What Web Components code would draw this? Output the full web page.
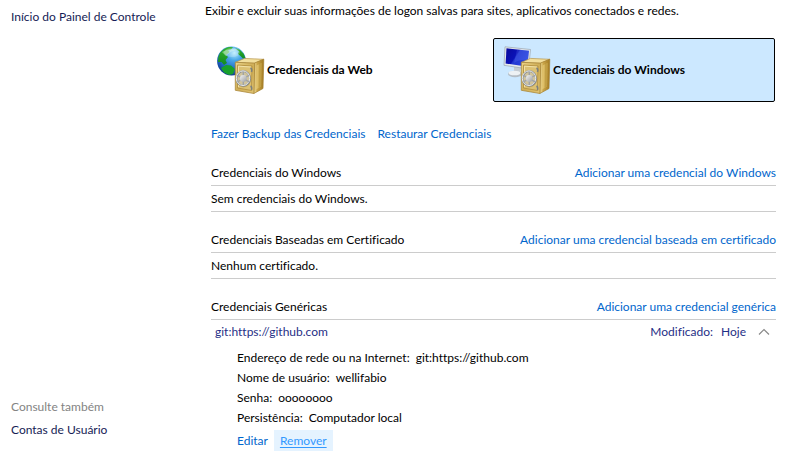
<!DOCTYPE html>
<html lang="pt-BR">
<head>
<meta charset="utf-8">
<title>Gerenciador de Credenciais</title>
<style>
html { scrollbar-width: none; background: #fff; }
body { margin: 0; font: 12px/20px Lato, "Open Sans", sans-serif; font-variant-ligatures: none; color: #000; }
</style>
</head>
<body>
<credential-manager></credential-manager>

<template id="t-app">
<style>
:host { display: flex; min-height: 100vh; }
main { flex: 1; min-width: 0; padding: 1px 12px 0 0; }
h1 { margin: 0; font: inherit; white-space: nowrap; }
.tiles { display: grid; grid-template-columns: 1fr 1fr; gap: 4px; margin: 17px 1px 0 2px; }
.body { margin-left: 6px; }
.links { display: flex; gap: 12px; margin: 22px 0 19px; }
.sections { display: grid; gap: 18px; }
</style>
<side-bar></side-bar>
<main>
  <h1>Exibir e excluir suas informações de logon salvas para sites, aplicativos conectados e redes.</h1>
  <div class="tiles">
    <vault-tile><vault-icon slot="icon" kind="web"></vault-icon>Credenciais da Web</vault-tile>
    <vault-tile selected><vault-icon slot="icon" kind="windows"></vault-icon>Credenciais do Windows</vault-tile>
  </div>
  <div class="body">
    <div class="links">
      <task-link>Fazer Backup das Credenciais</task-link>
      <task-link>Restaurar Credenciais</task-link>
    </div>
    <div class="sections">
      <credential-section><span slot="title">Credenciais do Windows</span><span slot="action">Adicionar uma credencial do Windows</span><empty-row>Sem credenciais do Windows.</empty-row></credential-section>
      <credential-section><span slot="title">Credenciais Baseadas em Certificado</span><span slot="action">Adicionar uma credencial baseada em certificado</span><empty-row>Nenhum certificado.</empty-row></credential-section>
      <credential-section><span slot="title">Credenciais Genéricas</span><span slot="action">Adicionar uma credencial genérica</span><credential-entry></credential-entry></credential-section>
    </div>
  </div>
</main>
</template>

<template id="t-side">
<style>
:host { display: flex; flex: 0 0 205px; box-sizing: border-box; flex-direction: column; justify-content: space-between; padding: 7px 8px 12px 11px; }
a { color: #151c55; text-decoration: none; display: block; }
a:hover { text-decoration: underline; }
p { margin: 0 0 3px; color: #838383; }
</style>
<a href="#">Início do Painel de Controle</a>
<nav><p>Consulte também</p><a href="#">Contas de Usuário</a></nav>
</template>

<template id="t-tile">
<style>
:host { display: block; }
button { box-sizing: border-box; width: 100%; height: 64px; display: flex; align-items: center; gap: 2px; padding: 0 9px; border: 1px solid transparent; border-radius: 2px; background: none; font: inherit; font-weight: 700; color: #000; text-align: left; white-space: nowrap; }
:host([selected]) button { background: #cce8ff; border-color: #000; }
</style>
<button type="button"><slot name="icon"></slot><span><slot></slot></span></button>
</template>

<template id="t-icon">
<style>
:host { display: block; width: 48px; height: 48px; }
svg { display: block; }
.web, .windows { display: none; }
:host([kind="web"]) .web, :host([kind="windows"]) .windows { display: inline; }
</style>
<svg width="48" height="48" viewBox="0 0 48 48" aria-hidden="true">
  <defs>
    <radialGradient id="sea" cx=".6" cy=".22" r=".85"><stop offset="0" stop-color="#b4ecff"/><stop offset=".3" stop-color="#4aa8e8"/><stop offset=".7" stop-color="#1c62c0"/><stop offset="1" stop-color="#0b2f80"/></radialGradient>
    <linearGradient id="land" x2="0" y2="1"><stop offset="0" stop-color="#35b52c"/><stop offset="1" stop-color="#138a22"/></linearGradient>
    <linearGradient id="screen" x2="1" y2=".5"><stop offset="0" stop-color="#0a0a9c"/><stop offset=".5" stop-color="#0a12b8"/><stop offset=".55" stop-color="#2236d0"/><stop offset="1" stop-color="#2c48e0"/></linearGradient>
    <linearGradient id="front" x2="1" y2="1"><stop offset="0" stop-color="#ecd58a"/><stop offset=".5" stop-color="#cfae56"/><stop offset="1" stop-color="#e2c676"/></linearGradient>
    <linearGradient id="side"><stop offset="0" stop-color="#f6e7a8"/><stop offset=".35" stop-color="#caa548"/><stop offset="1" stop-color="#a27a22"/></linearGradient>
    <linearGradient id="steel" x2="1" y2="1"><stop offset="0" stop-color="#f4f4f4"/><stop offset="1" stop-color="#9a9da0"/></linearGradient>
  </defs>
  <g class="web">
    <circle cx="14.5" cy="15" r="14.4" fill="url(#sea)"/>
    <path d="M3 7 Q7 2 12 1 L16 1.300 L14 3.500 L11 4 L12.500 6 L9 9 L11 11 L8.500 14 L10 17 L7 19 L4.500 16 L1 16 Q.5 11 3 7Z" fill="url(#land)"/>
    <path d="M18 2 L23 4 Q27 7 28.300 12 L26 12.500 L23.500 10 L21 8 L22 5.500Z" fill="url(#land)"/>
    <path d="M4 22 L9 19 L14 19.500 L18 23 L16 28 L12 29 Q6 27 4 22Z" fill="#18a02c"/>
    <path d="M5 6 Q13 1 21 4 Q14 4 9 10Z" fill="#dffbe8" opacity=".45"/>
    <ellipse cx="15" cy="6.500" rx="8" ry="4.500" fill="#fff" opacity=".22"/>
  </g>
  <g class="windows">
    <path d="M11 19 L18 20 L17 26 L11 25Z" fill="#c5ccd2"/>
    <ellipse cx="12" cy="28" rx="7" ry="3.200" fill="#b4bdc5"/>
    <ellipse cx="11.500" cy="27" rx="6" ry="2.300" fill="#edf1f4"/>
    <path d="M2 .8 L27.500 3.500 L25.500 23 L1 19.300Z" fill="#e5e9ec" stroke="#99a5af" stroke-width=".7"/>
    <path d="M3.500 2.300 L26 4.700 L24.300 20.700 L2.600 17.500Z" fill="url(#screen)"/>
    <path d="M14 3.500 L26 4.700 L25 14 Q17 13 11 17Z" fill="#718df8" opacity=".2"/>
  </g>
  <g>
    <path d="M18.500 16.300 L27.500 12.400 L46.700 13.300 L37.800 17.300Z" fill="#f2df9d" stroke="#b8954a" stroke-width=".7" stroke-linejoin="round"/>
    <path d="M37.500 17 L46.800 13.200 L46 42.500 L36.800 47.500Z" fill="url(#side)" stroke="#a5802f" stroke-width=".7" stroke-linejoin="round"/>
    <path d="M39.500 19.500 L44.500 17 L44 40.500 L39 43.500Z" fill="#e9ce7b" opacity=".65"/>
    <path d="M41.800 18.300 L44.500 17 L44 40.500 L41.500 42Z" fill="#b38d31" opacity=".6"/>
    <path d="M18.300 16.300 L37.700 17.200 L36.900 47.500 L18.300 44.300Z" fill="url(#front)" stroke="#ab883a" stroke-width=".8" stroke-linejoin="round"/>
    <path d="M20.500 19 L35 20 L34.500 44.500 L20.500 42Z" fill="#dcc173" stroke="#b08d3e" stroke-width=".8"/>
    <path d="M21.500 20.200 L34 21 M21.500 20.200 V41" stroke="#f8eab6" stroke-width=".8" fill="none"/>
    <path d="M33.500 22 q2 1 1 4 M33.500 40 q1.800 1 1 4" stroke="#7c807e" stroke-width="1.500" fill="none"/>
    <ellipse cx="26.500" cy="33" rx="7.600" ry="8.200" fill="#a4873f" opacity=".6"/>
    <ellipse cx="26.300" cy="32.500" rx="6.800" ry="7.400" fill="#d0c49c" stroke="#8b8f93" stroke-width="1.800"/>
    <ellipse cx="26" cy="32.200" rx="6.700" ry="7.300" fill="none" stroke="#e9ebed" stroke-width="1"/>
    <path d="M26.300 26 V39 M20.500 29.300 L32 35.800 M20.500 35.800 L32 29.300" stroke="#a0a3a6" stroke-width="1.400"/>
    <circle cx="26.300" cy="32.500" r="3.400" fill="url(#steel)"/>
  </g>
</svg>
</template>

<template id="t-link">
<style>
:host { display: inline-block; white-space: nowrap; }
a { color: #0066cc; text-decoration: none; display: block; }
:host([hot]) a { color: #3399ff; background: #e5f3ff; text-decoration: underline; text-underline-offset: 2px; padding: 1px 6px; }
</style>
<a href="#"><slot></slot></a>
</template>

<template id="t-section">
<style>
:host { display: block; }
header { display: flex; justify-content: space-between; padding-bottom: 2px; border-bottom: 1px solid #ccc; white-space: nowrap; }
h2 { margin: 0; font: inherit; }
</style>
<section><header><h2><slot name="title"></slot></h2><task-link><slot name="action"></slot></task-link></header><slot></slot></section>
</template>

<template id="t-empty">
<style>:host { display: block; padding: 3px 0 2px; border-bottom: 1px solid #ccc; }</style>
<slot></slot>
</template>

<template id="t-entry">
<style>
:host { display: block; }
button { width: 100%; display: flex; align-items: center; gap: 8px; padding: 2px 6px 2px 4px; border: 0; background: none; font: inherit; color: #1f2f86; text-align: left; }
.name { flex: 1; }
svg { display: block; margin-left: 4px; }
dl { margin: 4px 0 2px 26px; }
dl div { display: flex; gap: 6px; }
dd { margin: 0; }
.actions { display: flex; align-items: center; gap: 6px; margin-left: 26px; }
</style>
<button type="button" aria-expanded="true"><span class="name">git:https://github.com</span><span>Modificado:</span><span>Hoje</span><svg width="12" height="12" viewBox="0 0 12 12" aria-hidden="true"><path d="M1 8.500 L6 3.500 L11 8.500" fill="none" stroke="#888" stroke-width="1.200"/></svg></button>
<dl>
  <div><dt>Endereço de rede ou na Internet:</dt><dd>git:https://github.com</dd></div>
  <div><dt>Nome de usuário:</dt><dd>wellifabio</dd></div>
  <div><dt>Senha:</dt><dd>oooooooo</dd></div>
  <div><dt>Persistência:</dt><dd>Computador local</dd></div>
</dl>
<div class="actions"><task-link>Editar</task-link><task-link hot>Remover</task-link></div>
</template>

<script>
const parts = {
  'task-link': 't-link', 'vault-icon': 't-icon', 'vault-tile': 't-tile', 'side-bar': 't-side',
  'empty-row': 't-empty', 'credential-entry': 't-entry', 'credential-section': 't-section',
  'credential-manager': 't-app'
};
for (const [tag, id] of Object.entries(parts)) {
  customElements.define(tag, class extends HTMLElement {
    constructor() {
      super();
      this.attachShadow({ mode: 'open' }).append(document.getElementById(id).content.cloneNode(true));
    }
  });
}
</script>
</body>
</html>
